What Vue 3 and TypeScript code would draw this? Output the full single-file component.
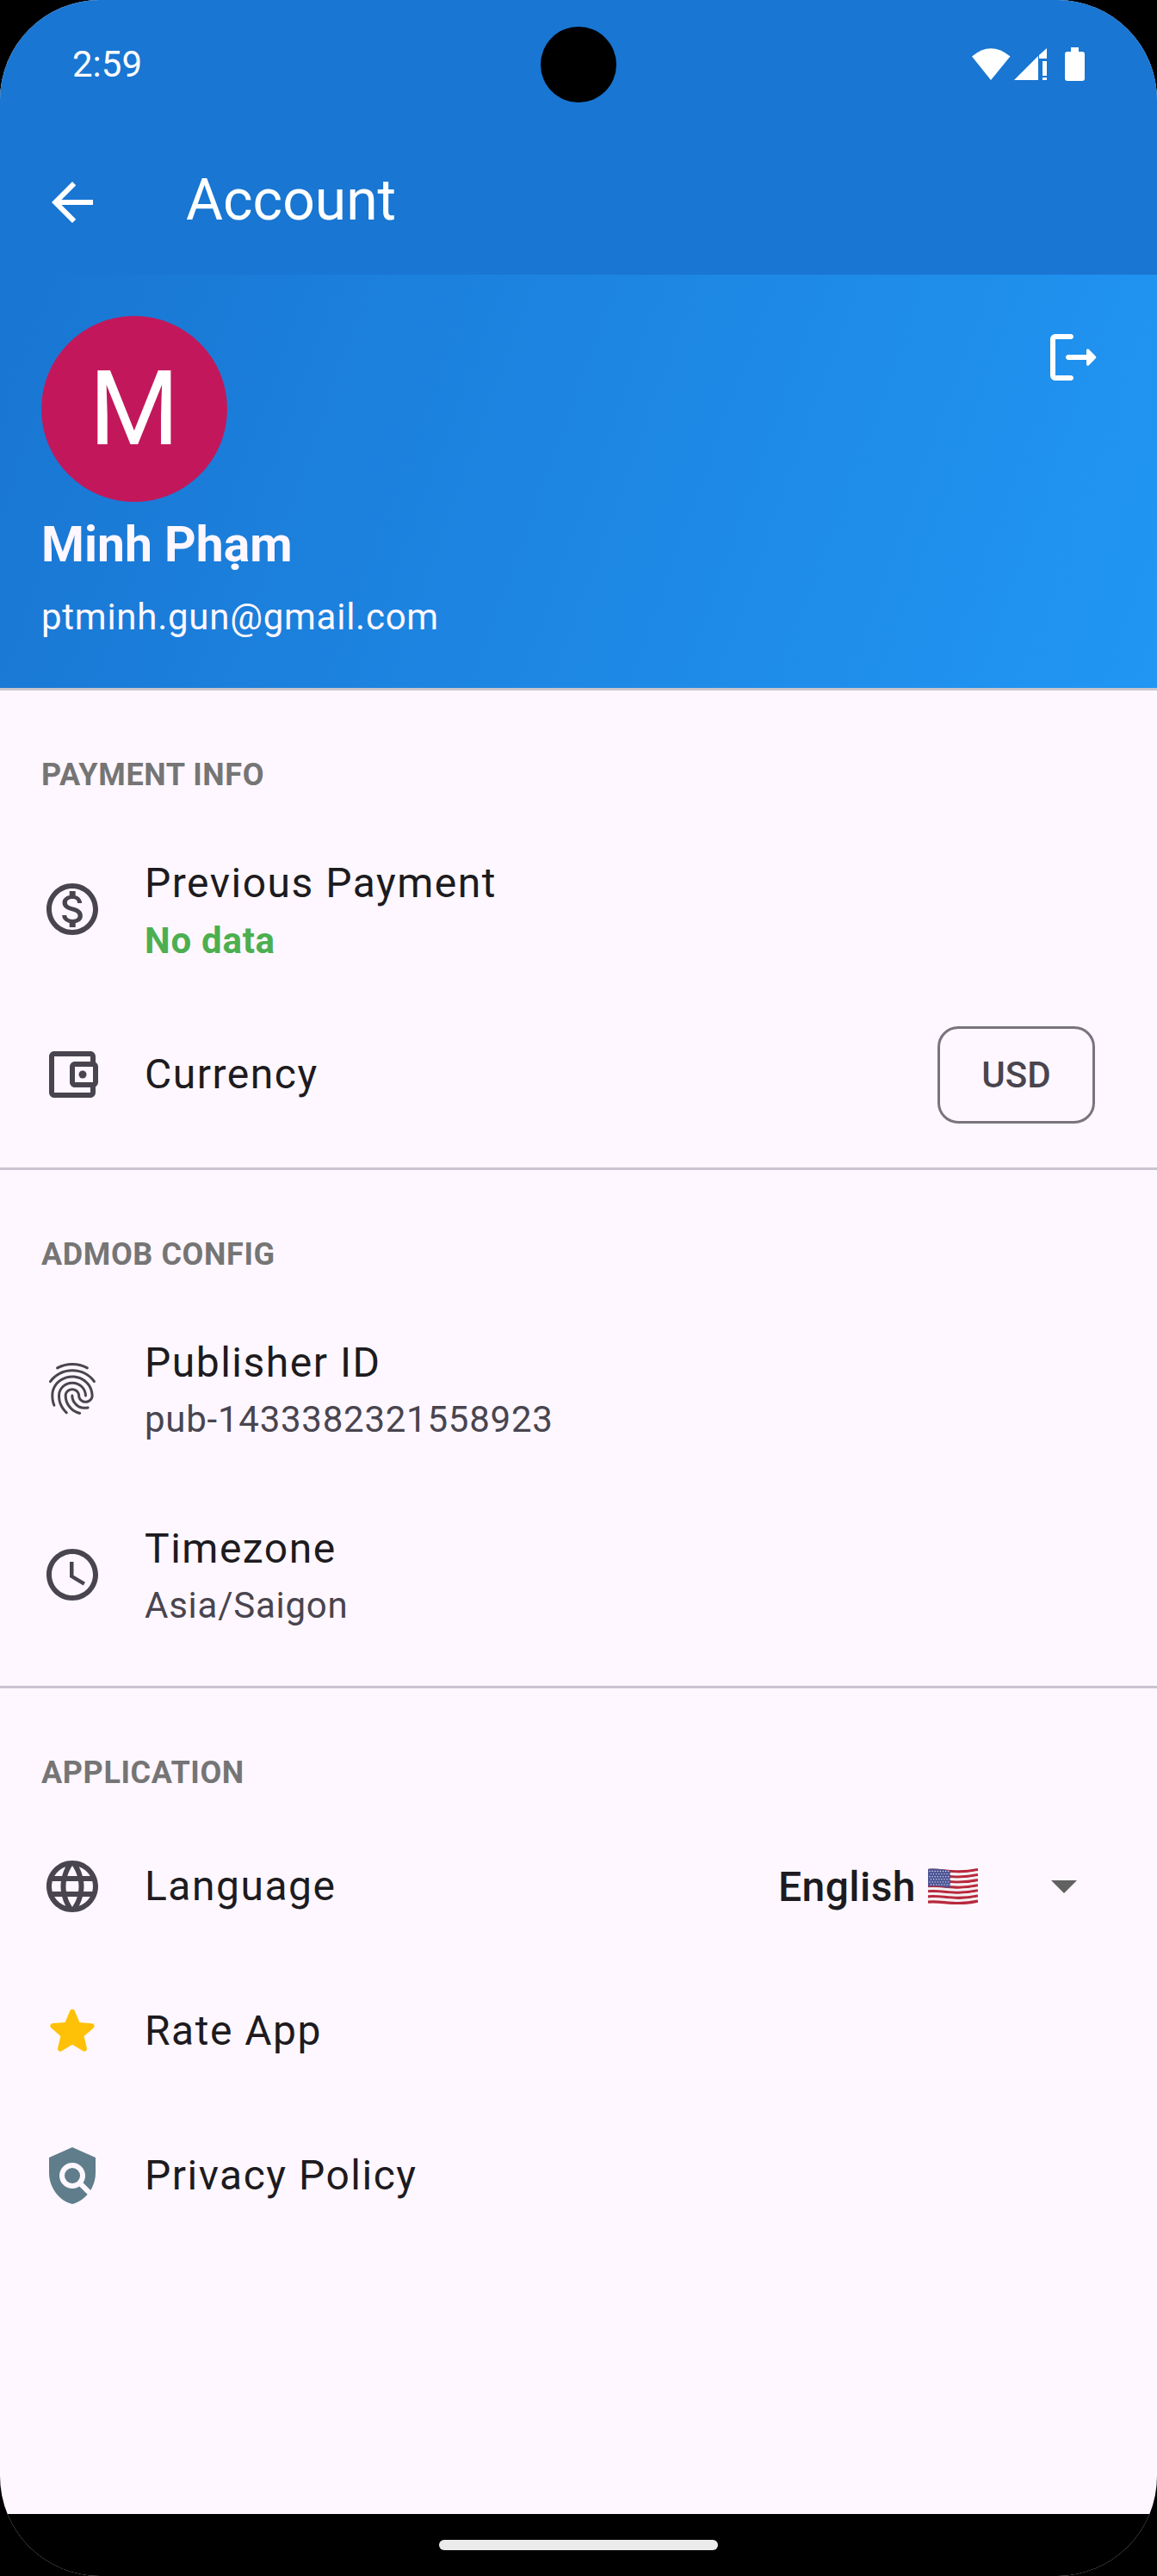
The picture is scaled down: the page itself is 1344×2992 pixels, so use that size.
<template>
  <div class="screen">
    <div class="status-bar">
      <span class="time">2:59</span>
      <svg class="status-icons" width="140" height="42" viewBox="1128 54 140 42">
        <path d="M1129 65.5Q1151 47 1173.5 65.5L1151 93Z" />
        <path d="M1178 93L1206 65V93Z" />
        <path d="M1207 64L1216 56V68H1207Z" />
        <rect x="1211" y="71" width="5" height="17" />
        <rect x="1211" y="90" width="5" height="3" />
        <rect x="1237" y="60" width="23" height="34" rx="3" />
        <rect x="1244" y="55" width="9" height="6" />
      </svg>
    </div>
    <div class="camera"></div>

    <header class="toolbar">
      <svg class="icon back" viewBox="0 0 24 24"><path d="M20 11H7.83l5.59-5.59L12 4l-8 8 8 8 1.41-1.41L7.83 13H20v-2z" /></svg>
      <h1 class="title">Account</h1>
    </header>

    <section class="profile">
      <div class="profile-info">
        <div class="avatar">M</div>
        <div class="name">Minh Phạm</div>
        <div class="email">ptminh.gun@gmail.com</div>
      </div>
      <svg class="icon logout" viewBox="0 0 24 24">
        <path d="M5 5h6c.55 0 1-.45 1-1s-.45-1-1-1H5c-1.1 0-2 .9-2 2v14c0 1.1.9 2 2 2h6c.55 0 1-.45 1-1s-.45-1-1-1H5V5z" />
        <path d="M20.65 11.65l-2.79-2.79c-.32-.32-.86-.1-.86.35V11h-7c-.55 0-1 .45-1 1s.45 1 1 1h7v1.79c0 .45.54.67.85.35l2.79-2.79c.2-.19.2-.51.01-.7z" />
      </svg>
    </section>

    <main class="content">
      <section v-for="group in groups" :key="group.title" class="group">
        <h2 class="group-title">{{ group.title }}</h2>
        <div v-for="row in group.rows" :key="row.title" class="row" :class="{ tall: row.sub }">
          <svg class="icon row-icon" viewBox="0 0 24 24" :style="{ color: row.color }">
            <path :d="row.icon" />
            <circle v-if="row.dot" :cx="row.dot[0]" :cy="row.dot[1]" :r="row.dot[2]" />
          </svg>
          <div class="row-text">
            <div class="row-title">{{ row.title }}</div>
            <div v-if="row.sub" class="row-sub" :class="{ 'no-data': row.sub === 'No data' }">{{ row.sub }}</div>
          </div>
          <button v-if="row.title === 'Currency'" class="currency" type="button">USD</button>
          <div v-if="row.title === 'Language'" class="language">
            <span>English</span>
            <svg class="flag" width="58" height="42" viewBox="0 0 58 42">
              <path
                v-for="(y, i) in stripes"
                :key="i"
                :d="`M0 ${y}C16 ${y - 2} 30 ${y + 5} 58 ${y - 1}`"
                :stroke="i % 2 ? '#f4f0f2' : '#b8283c'"
                stroke-width="3.3"
                fill="none"
              />
              <path d="M0 1C8 0 17 1 26 3V23C17 21 8 20 0 21Z" fill="#4d5596" />
              <circle v-for="(s, i) in stars" :key="'s' + i" :cx="s[0]" :cy="s[1]" r="0.7" fill="#dfe1f0" />
            </svg>
            <span class="caret"></span>
          </div>
        </div>
      </section>
    </main>

    <footer class="nav-bar"><span class="handle"></span></footer>
  </div>
</template>

<script setup lang="ts">
type Row = {
  title: string;
  sub?: string;
  icon: string;
  color?: string;
  dot?: [number, number, number];
};

type Group = {
  title: string;
  rows: Row[];
};

const stripes = Array.from({ length: 13 }, (_, i) => 2.5 + i * 3.05);

const stars: number[][] = [];
for (let r = 0; r < 6; r++) {
  for (let c = 0; c < 8; c++) {
    stars.push([2 + c * 3.1 + (r % 2) * 1.5, 3.5 + r * 3.1]);
  }
}

const groups: Group[] = [
  {
    title: 'PAYMENT INFO',
    rows: [
      {
        title: 'Previous Payment',
        sub: 'No data',
        icon: 'M12 2C6.48 2 2 6.48 2 12s4.48 10 10 10 10-4.48 10-10S17.52 2 12 2zm0 18c-4.41 0-8-3.59-8-8s3.59-8 8-8 8 3.59 8 8-3.59 8-8 8zm.31-8.86c-1.77-.45-2.34-.94-2.34-1.67 0-.84.79-1.43 2.1-1.43 1.38 0 1.9.66 1.94 1.64h1.71c-.05-1.34-.87-2.57-2.49-2.97V5H10.9v1.69c-1.51.32-2.72 1.3-2.72 2.81 0 1.79 1.49 2.69 3.66 3.21 1.95.46 2.34 1.15 2.34 1.87 0 .53-.39 1.39-2.1 1.39-1.6 0-2.23-.72-2.32-1.64H8.04c.1 1.7 1.36 2.66 2.86 2.97V19h2.34v-1.67c1.52-.29 2.72-1.16 2.73-2.77-.01-2.2-1.9-2.96-3.66-3.42z',
      },
      {
        title: 'Currency',
        icon: 'M21 7.28V5c0-1.1-.9-2-2-2H5c-1.11 0-2 .9-2 2v14c0 1.1.89 2 2 2h14c1.1 0 2-.9 2-2v-2.28c.59-.35 1-.98 1-1.72V9c0-.74-.41-1.38-1-1.72zM20 9v6h-7V9h7zM5 19V5h14v2h-6c-1.1 0-2 .9-2 2v6c0 1.1.9 2 2 2h6v2H5z',
        dot: [16, 12, 1.5],
      },
    ],
  },
  {
    title: 'ADMOB CONFIG',
    rows: [
      {
        title: 'Publisher ID',
        sub: 'pub-1433382321558923',
        icon: 'M17.81 4.47c-.08 0-.16-.02-.23-.06C15.66 3.42 14 3 12.01 3c-1.98 0-3.86.47-5.57 1.41-.24.13-.54.04-.68-.2-.13-.24-.04-.55.2-.68C7.82 2.52 9.86 2 12.01 2c2.13 0 3.99.47 6.03 1.52.25.13.34.43.21.67-.09.18-.26.28-.44.28zM3.5 9.72c-.1 0-.2-.03-.29-.09-.23-.16-.28-.47-.12-.7.99-1.4 2.25-2.5 3.75-3.27C9.98 4.04 14 4.03 17.15 5.65c1.5.77 2.76 1.86 3.75 3.25.16.22.11.54-.12.7-.23.16-.54.11-.7-.12-.9-1.26-2.04-2.25-3.39-2.94-2.87-1.47-6.54-1.47-9.4.01-1.36.7-2.5 1.7-3.4 2.96-.08.14-.23.21-.39.21zm6.25 12.07c-.13 0-.26-.05-.35-.15-.87-.87-1.34-1.43-2.01-2.64-.69-1.23-1.05-2.73-1.05-4.34 0-2.97 2.54-5.39 5.66-5.39s5.66 2.42 5.66 5.39c0 .28-.22.5-.5.5s-.5-.22-.5-.5c0-2.42-2.09-4.39-4.66-4.39-2.57 0-4.66 1.97-4.66 4.39 0 1.44.32 2.77.93 3.85.64 1.15 1.08 1.64 1.85 2.42.19.2.19.51 0 .71-.11.1-.24.15-.37.15zm7.17-1.85c-1.19 0-2.24-.3-3.1-.89-1.49-1.01-2.38-2.65-2.38-4.39 0-.28.22-.5.5-.5s.5.22.5.5c0 1.41.72 2.74 1.94 3.56.71.48 1.54.71 2.54.71.24 0 .64-.03 1.04-.1.27-.05.53.13.58.41.05.27-.13.53-.41.58-.57.11-1.07.12-1.21.12zM14.91 22c-.04 0-.09-.01-.13-.02-1.59-.44-2.63-1.03-3.72-2.1-1.4-1.39-2.17-3.24-2.17-5.22 0-1.62 1.38-2.94 3.08-2.94 1.7 0 3.08 1.32 3.08 2.94 0 1.07.93 1.94 2.08 1.94s2.08-.87 2.08-1.94c0-3.77-3.25-6.83-7.25-6.83-2.84 0-5.44 1.58-6.61 4.03-.39.81-.59 1.76-.59 2.8 0 .78.07 2.01.67 3.61.1.26-.03.55-.29.64-.26.1-.55-.04-.64-.29-.49-1.31-.73-2.61-.73-3.96 0-1.2.23-2.29.68-3.24 1.33-2.79 4.28-4.6 7.51-4.6 4.55 0 8.25 3.51 8.25 7.83 0 1.62-1.38 2.94-3.08 2.94s-3.08-1.32-3.08-2.94c0-1.07-.93-1.94-2.08-1.94s-2.08.87-2.08 1.94c0 1.71.66 3.31 1.87 4.51.95.94 1.86 1.46 3.27 1.85.27.07.42.35.35.61-.05.23-.26.38-.47.38z',
      },
      {
        title: 'Timezone',
        sub: 'Asia/Saigon',
        icon: 'M11.99 2C6.47 2 2 6.48 2 12s4.47 10 9.99 10C17.52 22 22 17.52 22 12S17.52 2 11.99 2zM12 20c-4.42 0-8-3.58-8-8s3.58-8 8-8 8 3.58 8 8-3.58 8-8 8zm.5-13H11v6l5.25 3.15.75-1.23-4.5-2.67z',
      },
    ],
  },
  {
    title: 'APPLICATION',
    rows: [
      {
        title: 'Language',
        icon: 'M11.99 2C6.47 2 2 6.48 2 12s4.47 10 9.99 10C17.52 22 22 17.52 22 12S17.52 2 11.99 2zm6.93 6h-2.95c-.32-1.25-.78-2.45-1.38-3.56 1.84.63 3.37 1.91 4.33 3.56zM12 4.04c.83 1.2 1.48 2.53 1.91 3.96h-3.82c.43-1.43 1.08-2.76 1.91-3.96zM4.26 14C4.1 13.36 4 12.69 4 12s.1-1.36.26-2h3.38c-.08.66-.14 1.32-.14 2 0 .68.06 1.34.14 2H4.26zm.82 2h2.95c.32 1.25.78 2.45 1.38 3.56-1.84-.63-3.37-1.9-4.33-3.56zm2.95-8H5.08c.96-1.66 2.49-2.93 4.33-3.56C8.81 5.55 8.35 6.75 8.03 8zM12 19.96c-.83-1.2-1.48-2.53-1.91-3.96h3.82c-.43 1.43-1.08 2.76-1.91 3.96zM14.34 14H9.66c-.09-.66-.16-1.32-.16-2 0-.68.07-1.35.16-2h4.68c.09.65.16 1.32.16 2 0 .68-.07 1.34-.16 2zm.25 5.56c.6-1.11 1.06-2.31 1.38-3.56h2.95c-.96 1.65-2.49 2.93-4.33 3.56zM16.36 14c.08-.66.14-1.32.14-2 0-.68-.06-1.34-.14-2h3.38c.16.64.26 1.31.26 2s-.1 1.36-.26 2h-3.38z',
      },
      {
        title: 'Rate App',
        color: '#ffc107',
        icon: 'M12 17.27l4.15 2.51c.76.46 1.69-.22 1.49-1.08l-1.1-4.72 3.67-3.18c.67-.58.31-1.68-.57-1.75l-4.83-.41-1.89-4.46c-.34-.81-1.5-.81-1.84 0L9.19 8.63l-4.83.41c-.88.07-1.24 1.17-.57 1.75l3.67 3.18-1.1 4.72c-.2.86.73 1.54 1.49 1.08l4.15-2.5z',
      },
      {
        title: 'Privacy Policy',
        color: '#607d8b',
        icon: 'M21 5l-9-4L3 5v6c0 5.55 3.84 10.74 9 12 2.3-.56 4.33-1.9 5.88-3.71l-3.12-3.12c-1.94 1.29-4.58 1.07-6.29-.64-1.95-1.95-1.95-5.12 0-7.07 1.95-1.95 5.12-1.95 7.07 0 1.71 1.71 1.92 4.35.64 6.29l2.9 2.9C20.29 15.69 21 13.38 21 11V5z',
        dot: [12, 12, 3],
      },
    ],
  },
];
</script>

<style>
html,
body {
  margin: 0;
  background: #000;
}
</style>

<style scoped>
.screen {
  position: relative;
  width: 1344px;
  height: 2992px;
  display: flex;
  flex-direction: column;
  overflow: hidden;
  border-radius: 116px;
  background: #fef7ff;
  font-family: Roboto, "Noto Sans", sans-serif;
  color: #1d1b20;
}

.icon {
  width: 72px;
  height: 72px;
  flex: none;
  fill: currentColor;
}

.status-bar {
  height: 151px;
  flex: none;
  box-sizing: border-box;
  display: flex;
  justify-content: space-between;
  padding: 54px 76px 0 84px;
  background: #1976d2;
  color: #fff;
}

.time {
  font-size: 42px;
  line-height: 42px;
}

.status-icons {
  fill: #fff;
}

.camera {
  position: absolute;
  left: 628px;
  top: 31px;
  width: 88px;
  height: 88px;
  border-radius: 50%;
  background: #000;
}

.toolbar {
  height: 168px;
  flex: none;
  box-sizing: border-box;
  display: flex;
  align-items: center;
  gap: 96px;
  padding-left: 48px;
  background: #1976d2;
  color: #fff;
}

.title {
  margin: 0 0 6px;
  font-size: 66px;
  font-weight: 400;
}

.profile {
  height: 483px;
  flex: none;
  box-sizing: border-box;
  display: flex;
  justify-content: space-between;
  padding: 48px 61px 0 48px;
  background: linear-gradient(110deg, #1976d2, #2196f3);
  border-bottom: 3px solid #c9c6cd;
  color: #fef7ff;
}

.profile-info {
  display: flex;
  flex-direction: column;
  align-items: flex-start;
}

.avatar {
  width: 216px;
  height: 216px;
  display: flex;
  align-items: center;
  justify-content: center;
  border-radius: 50%;
  background: #c2185b;
  color: #fff;
  font-size: 120px;
}

.name {
  margin-top: 14px;
  font-size: 57px;
  line-height: 72px;
  font-weight: 700;
}

.email {
  margin-top: 18px;
  font-size: 42px;
  line-height: 60px;
  letter-spacing: 0.75px;
}

.logout {
  margin-top: 12px;
  color: #fff;
}

.content {
  flex: 1;
}

.group {
  padding-bottom: 24px;
  border-bottom: 3px solid #cac4d0;
}

.group:nth-child(2) {
  padding-bottom: 21px;
}

.group:last-child {
  border-bottom: 0;
}

.group-title {
  height: 146px;
  margin: 0;
  box-sizing: border-box;
  padding: 74px 48px 0;
  font-size: 36px;
  line-height: 48px;
  font-weight: 700;
  letter-spacing: 0.6px;
  color: #757575;
}

.row {
  height: 168px;
  display: flex;
  align-items: center;
  gap: 48px;
  padding: 0 72px 0 48px;
}

.row.tall {
  height: 216px;
}

.row-icon {
  color: #49454f;
}

.row-text {
  flex: 1;
}

.row-title {
  font-size: 48px;
  line-height: 72px;
  letter-spacing: 1.5px;
}

.row-sub {
  font-size: 42px;
  line-height: 60px;
  letter-spacing: 0.75px;
  color: #49454f;
}

.row-sub.no-data {
  margin-top: 1px;
  font-weight: 700;
  color: #4caf50;
}

.currency {
  width: 183px;
  height: 113px;
  padding: 0;
  border: 3px solid #79747e;
  border-radius: 24px;
  background: transparent;
  font: 500 42px Roboto, sans-serif;
  color: #49454f;
}

.language {
  display: flex;
  align-items: center;
  font-size: 48px;
  font-weight: 500;
  letter-spacing: 0.45px;
}

.flag {
  margin-left: 14px;
}

.caret {
  margin-left: 85px;
  margin-right: 21px;
  border-left: 15px solid transparent;
  border-right: 15px solid transparent;
  border-top: 15px solid #616161;
}

.nav-bar {
  height: 72px;
  flex: none;
  display: flex;
  justify-content: center;
  padding-top: 30px;
  box-sizing: border-box;
  background: #000;
}

.handle {
  width: 324px;
  height: 12px;
  border-radius: 6px;
  background: #ebebeb;
}
</style>
